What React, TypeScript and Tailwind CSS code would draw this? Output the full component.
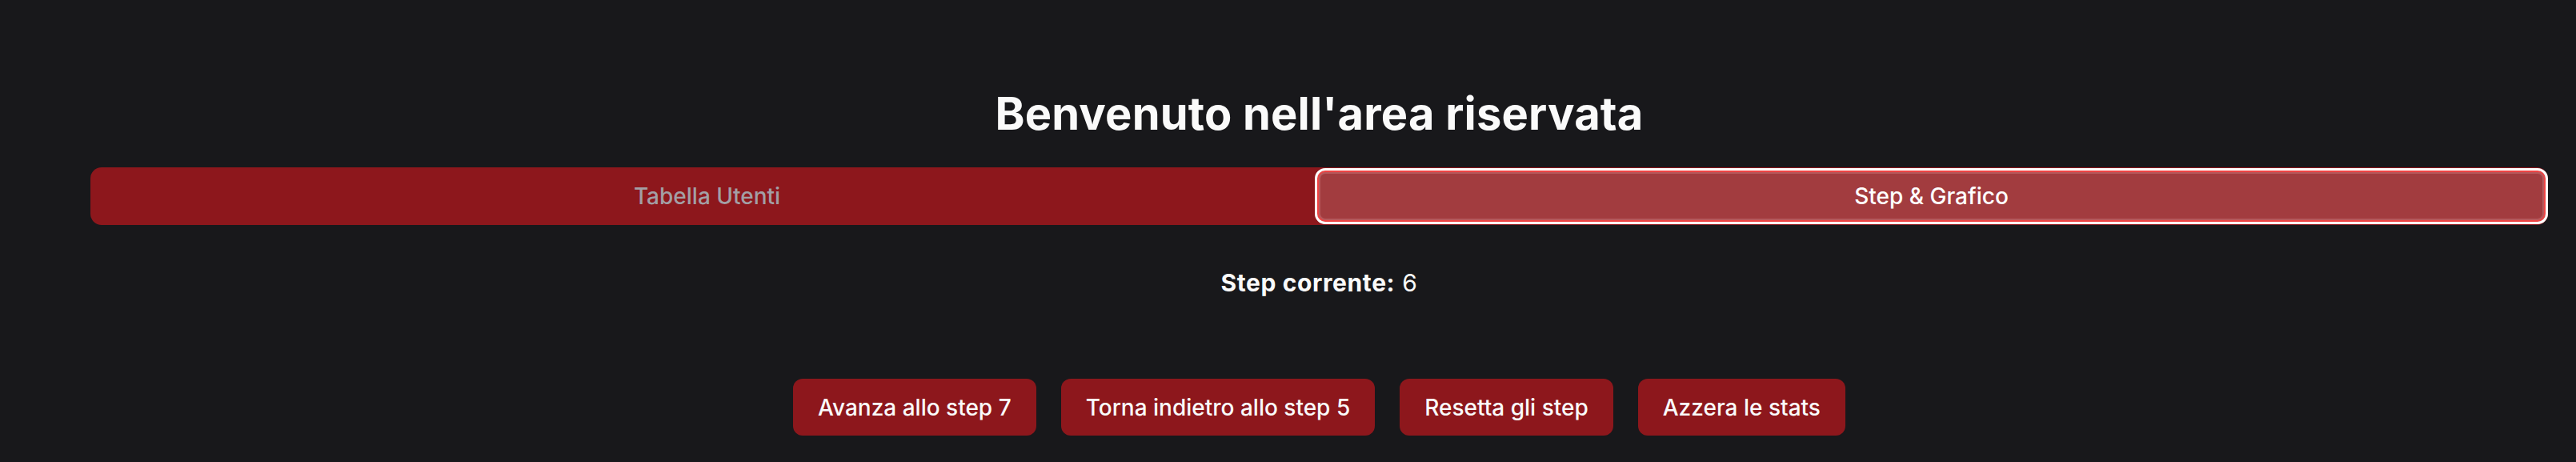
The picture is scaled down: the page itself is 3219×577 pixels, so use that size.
import React, { useState } from 'react';

const tabs = ['Tabella Utenti', 'Step & Grafico'];

export default function App() {
  const [active, setActive] = useState(1);
  const [step, setStep] = useState(6);

  return (
    <div
      className="min-h-[577px] w-full bg-[#18181b] text-[#fafafa] pl-[113px] pr-[35px] pt-[114px] pb-[33px] flex flex-col items-stretch"
      style={{ fontFamily: 'Inter, "Liberation Sans", sans-serif' }}
    >
      <h1 className="text-center text-[56px] leading-[56px] font-bold tracking-[0.2px]">
        Benvenuto nell'area riservata
      </h1>

      {/* Tab list */}
      <div className="mt-[39px] h-[72px] flex items-center rounded-[14px] bg-[#8d171c]">
        {tabs.map((t, i) =>
          i === active ? (
            <button
              key={t}
              onClick={() => setActive(i)}
              className="flex-1 h-[70px] rounded-[13px] border-[3px] border-white bg-[#a23c3f] shadow-[inset_0_0_0_2px_#ef4444,inset_0_0_0_4px_#b6585b] text-[28px] font-medium text-white flex items-center justify-center"
            >
              {t}
            </button>
          ) : (
            <button
              key={t}
              onClick={() => setActive(i)}
              className="w-[1530px] h-[70px] pl-[11px] text-[28px] font-medium text-[#a39fa5] flex items-center justify-center"
            >
              {t}
            </button>
          )
        )}
      </div>

      <p className="mt-[57px] text-center text-[30px] leading-[30px] tracking-[0.6px]">
        <span className="font-bold">Step corrente:</span> {step}
      </p>

      <div className="mt-[105px] flex justify-center gap-[31px]">
        <button
          onClick={() => setStep(step + 1)}
          className="h-[71px] px-[31px] rounded-[12px] bg-[#8d171c] text-[28px] font-medium flex items-center"
        >
          Avanza allo step {step + 1}
        </button>
        <button
          onClick={() => setStep(Math.max(0, step - 1))}
          className="h-[71px] px-[31px] rounded-[12px] bg-[#8d171c] text-[28px] font-medium flex items-center"
        >
          Torna indietro allo step {step - 1}
        </button>
        <button
          onClick={() => setStep(0)}
          className="h-[71px] px-[31px] rounded-[12px] bg-[#8d171c] text-[28px] font-medium flex items-center"
        >
          Resetta gli step
        </button>
        <button className="h-[71px] px-[31px] rounded-[12px] bg-[#8d171c] text-[28px] font-medium flex items-center">
          Azzera le stats
        </button>
      </div>
    </div>
  );
}
